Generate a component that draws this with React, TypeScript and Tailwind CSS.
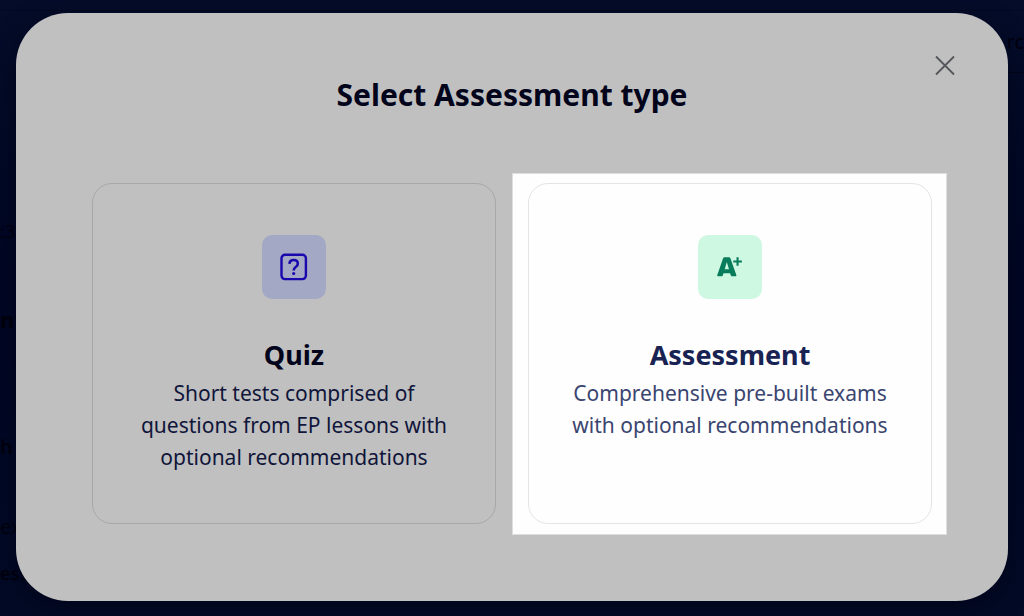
import type { ReactNode } from "react";

type OptionProps = {
  title: string;
  description: string;
  icon: ReactNode;
  tile: string;
  highlighted?: boolean;
};

function QuizIcon() {
  return (
    <svg viewBox="0 0 28 28" className="size-7" fill="none" stroke="#1a08ae" aria-hidden="true">
      <rect x="1.500" y="1.800" width="24.400" height="24.300" rx="3.500" strokeWidth="2.400" />
      <path d="M9.400 10.800c.2-2.400 1.900-3.800 4.200-3.800 2.500 0 4.200 1.500 4.200 3.700 0 1.500-.8 2.400-2.100 3.300-1.400 1-2 1.800-2 3.500" strokeWidth="2.600" />
      <circle cx="13.700" cy="20.500" r="1.600" fill="#1a08ae" stroke="none" />
    </svg>
  );
}

function GradeIcon() {
  return (
    <svg viewBox="0 0 28 28" className="size-7" fill="#087c5b" aria-hidden="true">
      <path fillRule="evenodd" d="M1.200 22.200 7 5.400Q7.400 4.300 8.500 4.300H13Q14.100 4.300 14.500 5.400L20.400 22.200Q20.700 23.300 19.600 23.300H15.900Q15.100 23.300 14.800 22.500L14.100 20.200H7.500L6.800 22.500Q6.600 23.300 5.800 23.300H2Q.9 23.300 1.200 22.200ZM8.700 16.200H13L10.800 8.900Z" />
      <path d="M20.500 4.200h2.100v3.200h3.300v2.100h-3.300v3.300h-2.100V9.500h-3.200V7.400h3.200Z" />
    </svg>
  );
}

function Option({ title, description, icon, tile, highlighted = false }: OptionProps) {
  return (
    <div className="relative flex">
      {highlighted && (
        <div className="absolute -top-2.5 -right-[15px] -bottom-[11px] -left-4 border border-[#dedede] bg-[#fefefe]" />
      )}
      <button
        type="button"
        className={`relative flex w-full flex-col items-center rounded-[20px] border px-10 pt-[51px] pb-[50px] text-center ${
          highlighted ? "border-[#e2e4e8] text-[#182353]" : "border-[#a6a8ab] text-[#02041b]"
        }`}
      >
        <span className={`flex size-16 items-center justify-center rounded-[10px] ${tile}`}>{icon}</span>
        <span className="mt-[38px] text-[27px] leading-9 font-bold">{title}</span>
        <span className={`mt-1 text-[21px] leading-8 ${highlighted ? "text-[#3a4570]" : "text-[#10153a]"}`}>
          {description}
        </span>
      </button>
    </div>
  );
}

function PageBehind() {
  return (
    <div aria-hidden="true" className="absolute inset-0 flex flex-col text-[20px] leading-6 text-[#01010e]">
      <div className="h-[11px] border-b border-[#030820]" />
      <div className="flex grow justify-between">
        <ul className="flex flex-col whitespace-nowrap pt-[208px]">
          <li className="text-[18px]">:3.</li>
          <li className="mt-16 text-[22px] font-extrabold">nt</li>
          <li className="mt-[104px] font-semibold">h</li>
          <li className="mt-14">ex</li>
          <li className="mt-[22px] text-[18px] font-semibold">ess</li>
        </ul>
        <div className="flex h-[62px] items-center border-b border-[#020617]">rc</div>
      </div>
    </div>
  );
}

export default function App() {
  return (
    <main className="relative min-h-screen bg-linear-to-b from-[#040c29] via-[#000624] to-[#020a26] px-4 pt-[13px] pb-[15px] font-['Noto_Sans','Open_Sans',sans-serif]">
      <PageBehind />
      <section
        role="dialog"
        aria-labelledby="dialog-title"
        className="relative rounded-[52px] bg-[#c0c0c0] px-[76px] pt-[62px] pb-[77px] shadow-[0_8px_24px_rgba(0,0,16,0.5)]"
      >
        <div className="absolute top-10 right-[51px] flex">
          <button type="button" aria-label="Close" className="flex size-6 items-center justify-center">
            <svg viewBox="0 0 24 24" className="size-6" fill="none" stroke="#55565b" strokeWidth="1.800" aria-hidden="true">
              <path d="M3 3.500 21 21.500M21 3.500 3 21.500" />
            </svg>
          </button>
        </div>
        <h1 id="dialog-title" className="text-center text-[30px] leading-10 font-bold text-[#02041b]">
          Select Assessment type
        </h1>
        <div className="mt-[68px] grid grid-cols-2 gap-8">
          <Option
            title="Quiz"
            description="Short tests comprised of questions from EP lessons with optional recommendations"
            icon={<QuizIcon />}
            tile="bg-[#a3a8c4]"
          />
          <Option
            title="Assessment"
            description="Comprehensive pre-built exams with optional recommendations"
            icon={<GradeIcon />}
            tile="bg-[#cff8e2]"
            highlighted
          />
        </div>
      </section>
    </main>
  );
}
